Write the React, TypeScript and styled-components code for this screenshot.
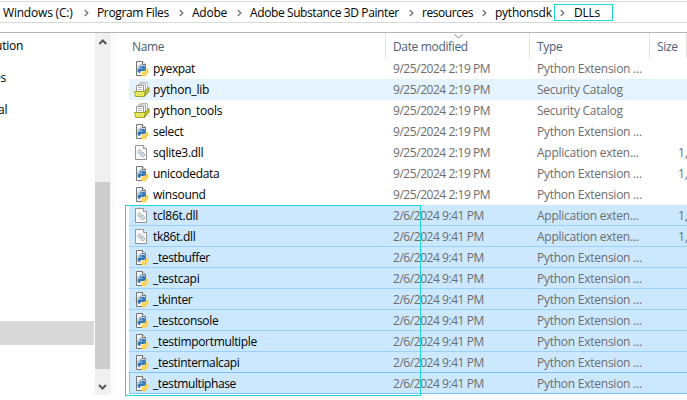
import React from 'react';
import styled, { createGlobalStyle } from 'styled-components';

const Global = createGlobalStyle`
  * { box-sizing: border-box; }
  body { margin: 0; background: #fff; overflow: hidden; }
`;

const Window = styled.div`
  position: relative;
  display: flex;
  flex-direction: column;
  width: 687px;
  height: 400px;
  overflow: hidden;
  background: #fff;
  color: #000;
  font: 12px/20px "Open Sans", "Noto Sans", sans-serif;
  white-space: nowrap;
`;

const AddressBar = styled.nav`
  display: flex;
  align-items: center;
  height: 22px;
  margin-top: 1px;
  padding-left: 3px;
  border-top: 1px solid #d9d9d9;
  border-bottom: 1px solid #d9d9d9;
`;

const Crumb = styled.span<{ $w: number; $ls?: number }>`
  flex: none;
  width: ${p => p.$w}px;
  padding-top: 1px;
  letter-spacing: ${p => p.$ls ?? -0.25}px;
`;

const CrumbArrow = styled.svg`
  flex: none;
  width: 5px;
  height: 8px;
  margin: 1px 8px 0 11px;
`;

const Current = styled.div`
  display: flex;
  align-items: center;
  width: 59px;
  height: 17px;
  margin-left: 3px;
  border: 1px solid #1cdad6;
  ${CrumbArrow} { margin-left: 5px; margin-right: 9px; }
`;

const Body = styled.main`
  display: flex;
  height: 363px;
  margin-top: 9px;
  border-top: 1px solid #b5b5b5;
`;

const Sidebar = styled.aside`
  flex: none;
  width: 95px;
  padding-top: 3px;
  overflow: hidden;
`;

const TreeItem = styled.div<{ $clip: number }>`
  height: 20px;
  margin-bottom: 12px;
  margin-left: -${p => p.$clip}px;
  letter-spacing: -0.2px;
`;

const TreeSelection = styled.div`
  width: 94px;
  height: 24px;
  margin-top: 201px;
  background: #d9d9d9;
`;

const ScrollBar = styled.div`
  flex: none;
  display: flex;
  flex-direction: column;
  justify-content: space-between;
  width: 16px;
  height: 362px;
  background: #f0f0f0;
`;

const ScrollArrow = styled.svg`
  display: block;
  width: 16px;
  height: 17px;
`;

const Thumb = styled.div`
  width: 15px;
  height: 187px;
  margin-top: 123px;
  background: #cdcdcd;
`;

const Divider = styled.div`
  flex: none;
  width: 1px;
  height: 362px;
  margin-left: 2px;
  background: #f5f5f5;
`;

const List = styled.section`
  flex: none;
  width: 558px;
  margin-left: 15px;
`;

const Header = styled.div`
  position: relative;
  display: grid;
  grid-template-columns: 257px 144px 120px 37px;
  height: 25px;
  color: #4c607a;
`;

const HeadCell = styled.div<{ $ls?: number; $pad?: number }>`
  padding: 4px 0 0 ${p => p.$pad ?? 7}px;
  border-right: 1px solid #e2e2e2;
  letter-spacing: ${p => p.$ls ?? -0.35}px;
  &:last-child { border: 0; }
`;

const SortMark = styled.svg`
  position: absolute;
  left: 325px;
  top: 1px;
  width: 9px;
  height: 5px;
`;

type RowState = 'hover' | 'selected' | 'focused' | undefined;

const Row = styled.div<{ $state: RowState }>`
  display: grid;
  grid-template-columns: 24px 240px 144px 123px 27px;
  height: 21px;
  line-height: 22px;
  background: ${p => (p.$state === 'hover' ? '#e5f3ff' : p.$state ? '#cce8ff' : '#fff')};
  box-shadow: ${p =>
    p.$state === 'focused'
      ? 'inset 1px 0 #7fc1fa, inset 0 -1px #7fc1fa, 0 -1px #7fc1fa'
      : p.$state === 'selected'
        ? 'inset 0 -1px #99d1ff'
        : 'none'};
`;

const FileIcon = styled.svg`
  width: 16px;
  height: 16px;
  margin: 3px 0 0 5px;
`;

const FileName = styled.span<{ $ls: number }>`
  letter-spacing: ${p => p.$ls}px;
`;

const Detail = styled.span<{ $ls: number }>`
  color: #6d6d6d;
  letter-spacing: ${p => p.$ls}px;
`;

const Size = styled(Detail)`
  padding-left: 18px;
`;

const Marquee = styled.div`
  position: absolute;
  left: 125px;
  top: 205px;
  width: 296px;
  height: 191px;
  border: 1px solid #1cd6d8;
`;

const Chevron = () => (
  <CrumbArrow viewBox="0 0 5 8"><path d="M.8 1l3 3-3 3" fill="none" stroke="#777" strokeWidth="1.4" /></CrumbArrow>
);

const PythonIcon = () => (
  <FileIcon viewBox="0 0 16 16">
    <path d="M2.5.5h6l3 3v11h-9z" fill="#f4f5f6" stroke="#757575" />
    <path d="M8.5.5v3h3" fill="#fff" stroke="#666" />
    <path d="M3 6l3-3h2v3l-2 5H3z" fill="#c3d1dc" />
    <path d="M7 4.8h2.5q1.5 0 1.5 1.4v2.6q0 1.2-1.3 1.2H7.5Q6 10 6 12H5q-1.4-.8-1.3-2.7Q3.8 7.4 5.3 7.4h3.2v-.5H5.8v-.8q0-1.3 1.2-1.3z" fill="#3577b3" />
    <path d="M11.8 7.5h1.4q1.4 1 1.4 3 0 2.3-1.5 2.3h-3v.5h2.5v.9q0 1.4-2.4 1.4t-2.6-1.4v-2.4q0-1.3 1.3-1.3h1.8q1.1 0 1.1-1.4z" fill="#ffd54f" />
    <path d="M6.8 6h1" stroke="#d5e8f7" />
  </FileIcon>
);

const CatalogIcon = () => (
  <FileIcon viewBox="0 0 16 16">
    <path d="M6.5.5h7v8h-7z" fill="#fff" stroke="#b9b9b9" />
    <path d="M4.5 2h7v7h-7z" fill="#fff" stroke="#a5a5a5" />
    <path d="M2.5 3.5h7v6h-7z" fill="#fff" stroke="#999" />
    <path d="M4 5.5h4M4 7.5h4" stroke="#b5b5b5" />
    <path d="M11 9.3l4-4v4l-4.5 5.2z" fill="#c4c735" stroke="#85891c" strokeWidth=".8" />
    <path d="M.5 9.5h10.6l-.8 5H1.6z" fill="#eef04a" stroke="#8f9324" strokeWidth=".8" />
    <path d="M4 11.2h3.6v1.3H4z" fill="#fff" stroke="#b0b33a" strokeWidth=".4" />
  </FileIcon>
);

const DllIcon = () => (
  <FileIcon viewBox="0 0 16 16">
    <path d="M1.5.5h8l3 3v11h-11z" fill="#fafafa" stroke="#969696" />
    <path d="M9.5.5v3h3" fill="#fff" stroke="#969696" />
    <circle cx="5.6" cy="6.8" r="1.9" fill="#edf2f4" stroke="#93a7b1" strokeDasharray="1.1 .4" />
    <circle cx="8.6" cy="9.6" r="2" fill="#edf2f4" stroke="#8299a4" strokeDasharray="1.1 .4" />
    <circle cx="5.6" cy="6.8" r=".6" fill="#768d98" />
    <circle cx="8.6" cy="9.6" r=".6" fill="#768d98" />
  </FileIcon>
);

const icons = { py: PythonIcon, cat: CatalogIcon, dll: DllIcon };
const types = {
  py: { label: 'Python Extension ...', ls: -0.25 },
  cat: { label: 'Security Catalog', ls: -0.25 },
  dll: { label: 'Application exten...', ls: -0.25 },
};

interface FileEntry { name: string; kind: keyof typeof icons; ls: number; size?: boolean; state?: RowState }

const files: FileEntry[] = [
  { name: 'pyexpat', kind: 'py', ls: -0.4 },
  { name: 'python_lib', kind: 'cat', ls: -0.2, state: 'hover' },
  { name: 'python_tools', kind: 'cat', ls: -0.25 },
  { name: 'select', kind: 'py', ls: -0.3 },
  { name: 'sqlite3.dll', kind: 'dll', ls: -0.3, size: true },
  { name: 'unicodedata', kind: 'py', ls: -0.3, size: true },
  { name: 'winsound', kind: 'py', ls: -0.25 },
  { name: 'tcl86t.dll', kind: 'dll', ls: -0.25, size: true, state: 'selected' },
  { name: 'tk86t.dll', kind: 'dll', ls: -0.3, size: true, state: 'selected' },
  { name: '_testbuffer', kind: 'py', ls: -0.35, state: 'selected' },
  { name: '_testcapi', kind: 'py', ls: -0.3, state: 'selected' },
  { name: '_tkinter', kind: 'py', ls: -0.35, state: 'selected' },
  { name: '_testconsole', kind: 'py', ls: -0.33, state: 'selected' },
  { name: '_testimportmultiple', kind: 'py', ls: -0.32, state: 'selected' },
  { name: '_testinternalcapi', kind: 'py', ls: -0.35, state: 'selected' },
  { name: '_testmultiphase', kind: 'py', ls: -0.4, state: 'focused' },
];

export default function App() {
  return (
    <Window>
      <Global />
      <AddressBar>
        <Crumb $w={70} $ls={-0.2}>Windows (C:)</Crumb><Chevron />
        <Crumb $w={71} $ls={-0.35}>Program Files</Crumb><Chevron />
        <Crumb $w={34}>Adobe</Crumb><Chevron />
        <Crumb $w={148} $ls={-0.4}>Adobe Substance 3D Painter</Crumb><Chevron />
        <Crumb $w={49} $ls={-0.45}>resources</Crumb><Chevron />
        <Crumb $w={56}>pythonsdk</Crumb>
        <Current><Chevron /><Crumb $w={26}>DLLs</Crumb></Current>
      </AddressBar>
      <Body>
        <Sidebar>
          <TreeItem $clip={5}>ution</TreeItem>
          <TreeItem $clip={6}>es</TreeItem>
          <TreeItem $clip={2}>al</TreeItem>
          <TreeSelection />
        </Sidebar>
        <ScrollBar>
          <ScrollArrow viewBox="0 0 16 17"><path d="M4.3 11l3.5-3.5L11.3 11" fill="none" stroke="#555" strokeWidth="2" /></ScrollArrow>
          <Thumb />
          <ScrollArrow viewBox="0 0 16 17"><path d="M4 7l3.5 3.5L11 7" fill="none" stroke="#555" strokeWidth="2" /></ScrollArrow>
        </ScrollBar>
        <Divider />
        <List>
          <Header>
            <HeadCell $pad={3}>Name</HeadCell>
            <HeadCell>Date modified</HeadCell>
            <HeadCell>Type</HeadCell>
            <HeadCell>Size</HeadCell>
            <SortMark viewBox="0 0 9 5"><path d="M.5.5l4 3.5 4-3.5" fill="none" stroke="#888" /></SortMark>
          </Header>
          {files.map((f, i) => {
            const Icon = icons[f.kind];
            const type = types[f.kind];
            return (
              <Row key={f.name} $state={f.state}>
                <Icon />
                <FileName $ls={f.ls}>{f.name}</FileName>
                <Detail $ls={-0.45}>{i < 7 ? '9/25/2024 2:19 PM' : '2/6/2024 9:41 PM'}</Detail>
                <Detail $ls={type.ls}>{type.label}</Detail>
                {f.size && <Size $ls={0}>1,</Size>}
              </Row>
            );
          })}
        </List>
      </Body>
      <Marquee />
    </Window>
  );
}
